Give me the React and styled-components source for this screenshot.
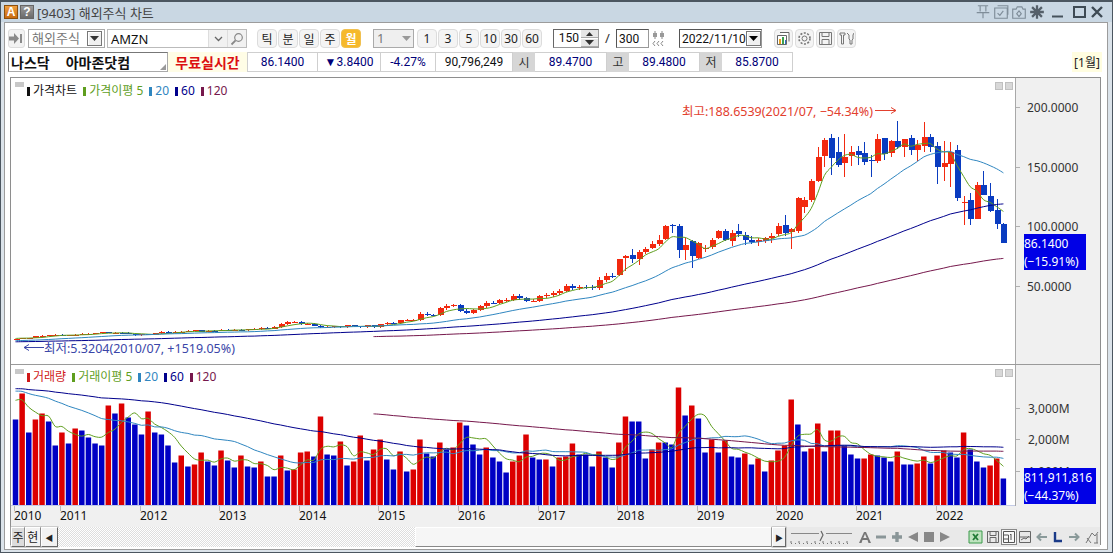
import React from "react";
import styled, { createGlobalStyle } from "styled-components";

const GlobalStyle = createGlobalStyle`
  html, body { margin: 0; padding: 0; background: #fff; }
  body { font-family: "Noto Sans", "Noto Sans CJK KR", sans-serif; font-size: 12px; }
  * { box-sizing: border-box; }
`;

// monthly data, Jun 2010 .. Nov 2022
const PRE_CLOSE = [
  6.25, 5.9, 6.8, 6.85, 6.25,
  2.2, 1.8, 1.7, 1.6, 1.75, 1.65, 2.2, 2.1, 2.25, 1.95, 2.4, 2.35,
  2.25, 1.9, 1.8, 1.75, 1.75, 1.95, 1.35, 1.5, 1.6, 1.9, 2.0, 2.0,
  1.9, 2.0, 2.0, 3.0, 3.4, 3.4, 3.9, 4.0, 4.65, 4.45, 4.5, 4.6,
  3.9, 3.2, 3.55, 3.9, 4.05, 3.65, 3.85, 4.05, 3.65, 2.85, 2.15, 2.55,
  2.95, 3.2, 3.65, 4.0, 3.9, 4.2, 4.3, 4.05, 4.65, 5.95, 6.75, 6.7,
];

const EARLY_CLOSE = [
  5.45, 5.93, 6.24, 7.85, 8.26, 8.75, 9.0,
  8.48, 8.63, 9.0, 9.83, 9.83, 10.2, 11.1, 10.76, 10.8, 10.6, 9.6, 8.65,
  9.7, 8.99, 10.1, 11.6, 10.6, 11.4, 11.6, 12.4, 12.7, 11.6, 12.6, 12.5,
  13.3, 13.2, 13.3, 12.7, 13.5, 13.9, 15.0, 14.0, 15.6, 18.2, 19.7, 19.9,
  17.9, 18.1, 16.8, 15.2, 15.6, 16.2, 15.6, 17.0, 16.1, 15.2, 16.9, 15.5,
  17.7, 19.0, 18.6, 21.1, 21.5, 21.7, 26.8, 25.7, 25.6, 31.3, 33.3, 33.8,
  29.4, 27.6, 29.7, 33.0, 36.1, 35.8, 37.9, 38.5, 41.9, 39.5, 37.5, 37.5,
  41.2, 42.3, 44.3, 46.2, 49.7, 48.4, 49.4, 49.0, 48.1, 55.3, 58.8, 58.5,
];

// open, high, low, close
const LATE_OHLC = [
  [59.4, 72.6, 58.5, 72.5], [73.2, 76.2, 62.9, 75.6], [76.0, 80.9, 69.0, 72.4], [72.6, 80.2, 67.6, 78.3],
  [78.2, 82.6, 77.2, 81.5], [81.9, 88.0, 81.3, 85.0], [85.3, 93.2, 83.9, 88.9], [89.1, 101.3, 88.8, 100.6],
  [100.9, 102.5, 94.3, 100.2], [100.2, 101.7, 73.8, 79.9], [80.4, 90.3, 71.8, 84.5], [87.7, 88.9, 65.4, 75.1],
  [73.3, 86.8, 73.0, 85.9], [81.9, 84.3, 78.3, 82.0], [83.0, 90.2, 80.7, 89.0], [90.0, 96.7, 89.9, 96.3],
  [96.6, 98.1, 88.2, 88.8], [88.0, 97.0, 83.6, 94.7], [96.2, 101.8, 91.0, 93.3], [92.9, 95.0, 84.3, 88.8],
  [88.7, 92.0, 85.6, 86.8], [87.0, 90.0, 84.0, 88.8], [88.0, 91.0, 86.0, 90.0], [90.2, 94.9, 86.0, 92.4],
  [93.8, 102.8, 91.6, 100.4], [101.6, 109.3, 92.0, 94.2], [95.3, 99.0, 81.3, 97.5], [96.6, 125.0, 94.3, 123.7],
  [116.8, 125.0, 111.1, 122.1], [122.4, 139.9, 120.6, 137.9], [137.9, 167.2, 137.0, 158.2], [159.0, 174.7, 150.0, 172.5],
  [174.5, 177.6, 143.6, 157.4], [163.0, 174.8, 150.0, 151.8], [153.0, 177.6, 142.0, 158.4], [159.0, 167.5, 151.0, 162.8],
  [163.5, 168.0, 152.0, 160.3], [162.0, 171.0, 152.0, 154.6], [156.0, 160.0, 142.0, 154.7], [155.0, 177.7, 153.0, 173.4],
  [174.0, 174.0, 156.0, 161.2], [162.0, 173.0, 158.0, 172.0], [172.0, 188.6, 165.0, 166.4], [167.0, 173.0, 158.8, 173.5],
  [174.0, 177.0, 160.0, 164.3], [164.5, 173.0, 155.0, 168.6], [168.0, 188.0, 163.0, 175.4], [175.0, 177.5, 163.0, 166.7],
  [167.5, 171.4, 135.4, 149.6], [150.0, 172.0, 138.0, 153.6], [152.7, 170.8, 133.6, 163.0], [164.0, 168.4, 121.6, 124.3],
  [120.0, 126.0, 101.3, 120.2], [122.0, 128.0, 101.4, 106.2], [106.0, 137.6, 105.9, 134.9], [135.0, 146.6, 126.7, 126.8],
  [126.0, 136.5, 112.0, 113.0], [113.6, 123.0, 97.7, 102.4], [102.0, 103.0, 85.9, 86.14],
];

// volume bars: [height in px, up?]
const VOLUME = [
  [86,0],[112,1],[73,0],[86,1],[92,1],[84,0],[60,0],[73,1],[62,0],[77,1],[75,0],[68,0],[62,0],[60,0],[100,1],
  [92,0],[102,1],[88,0],[81,0],[71,0],[94,1],[73,0],[71,0],[60,0],[43,0],[50,1],[39,0],[41,1],[53,1],[44,0],
  [40,0],[55,1],[45,0],[38,0],[50,1],[39,0],[38,0],[44,1],[29,0],[29,0],[50,1],[35,0],[36,1],[53,1],[54,1],
  [49,0],[89,1],[51,0],[50,0],[64,1],[40,0],[44,1],[70,1],[45,0],[56,1],[66,1],[46,0],[36,0],[54,1],[34,0],
  [36,1],[66,1],[52,0],[49,0],[63,1],[56,0],[58,1],[83,1],[80,0],[61,0],[51,0],[58,1],[48,0],[44,0],[33,0],
  [44,1],[50,1],[71,1],[48,0],[46,0],[46,1],[39,0],[48,1],[49,1],[62,1],[51,0],[51,0],[39,0],[54,1],[48,0],
  [38,0],[63,1],[89,1],[84,0],[84,0],[47,0],[56,1],[63,1],[63,0],[61,0],[118,1],[90,0],[100,1],[87,0],[53,0],
  [66,1],[53,0],[65,1],[49,0],[48,0],[52,1],[41,0],[47,1],[34,0],[45,1],[55,1],[60,1],[106,1],[81,0],[54,0],
  [57,1],[82,1],[54,0],[75,1],[75,1],[60,0],[51,0],[47,0],[47,1],[51,1],[50,0],[48,0],[44,0],[54,1],[41,0],
  [41,0],[42,1],[49,1],[42,0],[50,1],[55,1],[53,0],[48,0],[73,1],[56,0],[44,0],[38,0],[40,1],[47,1],[27,0],
];
const PRE_VOLUME = [...Array(60).fill(118), ...Array(5).fill(110)];

const barX = (i) => 15.5 + 6.63 * i;
const priceY = (p) => 345.5 - p * 1.19;
const volY = (h) => 505.5 - h;

const candles = [
  ...EARLY_CLOSE.map((c, i) => {
    const o = i === 0 ? 5.2 : EARLY_CLOSE[i - 1];
    return [o, Math.max(o, c) * 1.035, Math.min(o, c) * 0.965, c];
  }),
  ...LATE_OHLC,
];

const sma = (pre, values, period) =>
  values.map((_, i) => {
    const all = [...pre, ...values.slice(0, i + 1)];
    if (all.length < period) return null;
    return all.slice(-period).reduce((a, b) => a + b, 0) / period;
  });

// smooth line through the points, like the chart's own drawing
const splinePath = (pts) => {
  let d = `M${pts[0][0]} ${pts[0][1]}`;
  for (let i = 0; i < pts.length - 1; i++) {
    const p0 = pts[i - 1] || pts[i];
    const p1 = pts[i];
    const p2 = pts[i + 1];
    const p3 = pts[i + 2] || p2;
    const c1x = p1[0] + (p2[0] - p0[0]) / 6;
    const c1y = p1[1] + (p2[1] - p0[1]) / 6;
    const c2x = p2[0] - (p3[0] - p1[0]) / 6;
    const c2y = p2[1] - (p3[1] - p1[1]) / 6;
    d += `C${c1x.toFixed(1)} ${c1y.toFixed(1)} ${c2x.toFixed(1)} ${c2y.toFixed(1)} ${p2[0].toFixed(1)} ${p2[1].toFixed(1)}`;
  }
  return d;
};

const maPath = (series, toY) =>
  splinePath(series.map((v, i) => (v === null ? null : [barX(i), toY(v)])).filter(Boolean));

const MA_COLORS = { 5: "#5f9e1e", 20: "#2f86c0", 60: "#00008c", 120: "#76184c" };
const PERIODS = [5, 20, 60, 120];
const closes = candles.map((c) => c[3]);
const heights = VOLUME.map((v) => v[0]);

const YEARS = [
  [14, 2010], [60, 2011], [140, 2012], [219, 2013], [299, 2014], [378, 2015],
  [458, 2016], [538, 2017], [617, 2018], [697, 2019], [776, 2020], [856, 2021], [936, 2022],
];

const Window = styled.div`
  width: 1113px;
  height: 553px;
  display: flex;
  flex-direction: column;
  background: #dbe3ea;
  border: 1px solid #4b5660;
  border-top-width: 2px;
  padding: 0 4px 2px 3px;
  overflow: hidden;
`;

const TitleBar = styled.div`
  height: 20px;
  margin: 0 -4px 0 -3px;
  padding: 0 7px 0 3px;
  display: flex;
  align-items: center;
  background: #c9d7e3;
`;

const AppBadge = styled.span`
  width: 14px;
  height: 14px;
  margin-right: 2px;
  display: flex;
  align-items: center;
  justify-content: center;
  color: #fff;
  font: bold 12px "Liberation Sans", sans-serif;
  background: ${(p) => (p.$help ? "linear-gradient(#9a9a9a, #6a6a6a)" : "linear-gradient(#f0a040, #c86a10)")};
  border: 1px solid ${(p) => (p.$help ? "#666" : "#8a5010")};
`;

const TitleText = styled.div`
  margin-left: 1px;
  flex: 1;
  color: #444;
  font-size: 13px;
  white-space: nowrap;
`;

const TitleIcons = styled.div`
  display: flex;
  align-items: center;
  gap: 2px;
`;

const Body = styled.div`
  flex: 1;
  min-height: 0;
  display: flex;
  flex-direction: column;
  background: #fff;
  border: 1px solid #9c9c9c;
  padding: 6px 6px 4px 5px;
`;

const ToolRow = styled.div`
  height: 19px;
  margin-left: -2px;
  display: flex;
  align-items: stretch;
  flex: none;
`;

const ArrowButton = styled.div`
  width: 17px;
  margin-right: 3px;
  display: flex;
  align-items: center;
  justify-content: center;
  background: #f2f2f2;
  border: 1px solid #ddd;
  border-radius: 3px;
`;

const SelectBox = styled.div`
  width: ${(p) => p.$w}px;
  margin-left: ${(p) => p.$ml || 0}px;
  display: flex;
  align-items: center;
  justify-content: space-between;
  padding: 0 2px 0 3px;
  color: ${(p) => p.$color || "#000"};
  background: ${(p) => p.$bg || "#fff"};
  border: 1px solid #aaa;
  font-size: 13px;
  line-height: 1;
`;

const DropButton = styled.span`
  width: 15px;
  height: 15px;
  flex: none;
  display: flex;
  align-items: center;
  justify-content: center;
  background: #f0f0f0;
  border: 1px solid #777;
  box-shadow: inset 1px 1px 0 #fff;
`;

const SymbolBox = styled.div`
  width: 140px;
  margin-left: 2px;
  display: flex;
  align-items: stretch;
  border: 1px solid #bbb;
`;

const SymbolInput = styled.div`
  flex: 1;
  padding-left: 3px;
  display: flex;
  align-items: center;
  font: 13px "Noto Sans", sans-serif;
  color: #111;
`;

const SymbolIcon = styled.span`
  width: 19px;
  display: flex;
  align-items: center;
  justify-content: center;
  background: #f1f1f1;
  border-left: 1px solid #ddd;
`;

const ButtonGroup = styled.div`
  margin-left: ${(p) => p.$ml}px;
  display: flex;
  gap: 1px;
`;

const PeriodButton = styled.div`
  width: 20px;
  display: flex;
  align-items: center;
  justify-content: center;
  border-radius: 4px;
  font-size: 12px;
  color: ${(p) => (p.$active ? "#fff" : "#222")};
  font-weight: ${(p) => (p.$active ? 700 : 400)};
  background: ${(p) => (p.$active ? "#f6b92b" : "#f4f4f4")};
  border: 1px solid ${(p) => (p.$active ? "#f0c050" : "#dcdcdc")};
`;

const SpinBox = styled.div`
  width: 46px;
  margin-left: 11px;
  display: flex;
  border: 1px solid #999;
  border-top-color: #666;
  border-left-color: #666;
`;

const NumberText = styled.div`
  flex: 1;
  padding-right: 2px;
  text-align: right;
  font: 12px/17px Roboto, sans-serif;
  color: #111;
`;

const SpinArrows = styled.div`
  width: 17px;
  display: flex;
  flex-direction: column;
  gap: 1px;
`;

const SpinButton = styled.span`
  flex: 1;
  display: flex;
  align-items: center;
  justify-content: center;
  background: #e6e6e6;
  border-bottom: 1px solid #aaa;
`;

const Slash = styled.div`
  width: 17px;
  text-align: center;
  font-size: 13px;
  line-height: 19px;
  color: #333;
`;

const PlainBox = styled.div`
  width: ${(p) => p.$w}px;
  margin-left: ${(p) => p.$ml || 0}px;
  display: flex;
  align-items: center;
  justify-content: space-between;
  padding: 0 1px 0 2px;
  font: 12px Roboto, sans-serif;
  color: #111;
  white-space: nowrap;
  border: 1px solid #999;
  border-top-color: #555;
  border-left-color: #555;
`;

const SmallIcons = styled.div`
  margin-left: ${(p) => p.$ml}px;
  display: flex;
  align-items: center;
  gap: ${(p) => p.$gap || 2}px;
`;

const ToolIcon = styled.span`
  width: 19px;
  height: 19px;
  display: flex;
  align-items: center;
  justify-content: center;
  background: #f4f4f4;
  border: 1px solid #ddd;
  border-radius: 4px;
`;

const QuoteRow = styled.div`
  height: 20px;
  margin: 4px 0 0 -2px;
  display: flex;
  flex: none;
`;

const NameBox = styled.div`
  width: 160px;
  padding-left: 2px;
  position: relative;
  display: flex;
  align-items: center;
  gap: 16px;
  font: 700 14px "Noto Sans CJK KR", sans-serif;
  color: #111;
  border: 1px solid #aaa;
  border-top-color: #777;
  border-left-color: #777;
  background: #fff;

  &::after {
    content: "";
    position: absolute;
    right: 1px;
    bottom: 1px;
    border: 3px solid transparent;
    border-right-color: #999;
    border-bottom-color: #999;
  }
`;

const FreeTag = styled.div`
  width: 79px;
  display: flex;
  align-items: center;
  justify-content: center;
  color: #dc1010;
  background: #fffde6;
  font: 700 14px "Noto Sans CJK KR", sans-serif;
`;

const QuoteCell = styled.div`
  width: ${(p) => p.$w}px;
  display: flex;
  align-items: center;
  justify-content: center;
  font: 12px Roboto, sans-serif;
  color: ${(p) => p.$color || "#000078"};
  border: 1px solid #cfcfcf;
  border-left-width: ${(p) => (p.$first ? 1 : 0)}px;
`;

const QuoteHead = styled.div`
  width: 22px;
  display: flex;
  align-items: center;
  justify-content: center;
  font-size: 12px;
  color: #333;
  background: #d6d6d6;
`;

const MonthTag = styled.div`
  margin-left: auto;
  width: 30px;
  margin-right: -1px;
  display: flex;
  align-items: center;
  justify-content: center;
  font-size: 12px;
  color: #222;
  background: #fffde0;
`;

const ChartFrame = styled.div`
  flex: 1;
  min-height: 0;
  margin-top: 5px;
  display: flex;
  flex-direction: column;
  border: 1px solid #8e8e8e;
`;

const Pane = styled.div`
  height: ${(p) => p.$h}px;
  display: flex;
  flex: none;
  border-bottom: ${(p) => (p.$line ? "1px solid #9a9a9a" : "0")};
`;

const Plot = styled.div`
  position: relative;
  width: 1004px;
  flex: none;
  background: #fff;
`;

const PlotSvg = styled.svg`
  display: block;
  width: 100%;
  height: 100%;
`;

const Legend = styled.div`
  position: absolute;
  left: 16px;
  top: ${(p) => p.$top}px;
  display: flex;
  align-items: center;
  gap: 6px;
  font-size: 12px;
  line-height: 14px;
  white-space: nowrap;
`;

const LegendItem = styled.span`
  display: flex;
  align-items: center;
  gap: 3px;
  color: ${(p) => p.$color};

  &::before {
    content: "";
    width: 3px;
    height: 9px;
    background: ${(p) => p.$color};
  }
`;

const PaneMark = styled.span`
  position: absolute;
  left: 4px;
  top: 4px;
  width: 9px;
  height: 5px;
  background: #c8c8c8;
`;

const PaneButtons = styled.div`
  position: absolute;
  right: 2px;
  top: 4px;
  display: flex;
  gap: 2px;
`;

const PaneButton = styled.span`
  width: 8px;
  height: 8px;
  background: #d8d8d8;
  border: 1px solid #c0c0c0;
`;

const Axis = styled.div`
  position: relative;
  flex: 1;
  background: #f0f0f0;
  border-left: 1px solid #a8a8a8;
`;

const AxisBadge = styled.div`
  position: absolute;
  left: 8px;
  top: ${(p) => p.$top}px;
  width: ${(p) => p.$w}px;
  padding-top: 1px;
  background: #0000e6;
  color: #fff;
  font-size: 12px;
  line-height: 17.5px;
  white-space: nowrap;
`;

const AxisText = styled.text`
  font: 12px "Noto Sans", sans-serif;
  fill: #333;
`;

const NoteText = styled.text`
  font: 12.5px "Noto Sans", "Noto Sans CJK KR", sans-serif;
  fill: ${(p) => p.$color};
`;

const YearStrip = styled.div`
  height: 21px;
  flex: none;
  background: #f0f0f0;
`;

const YearText = styled.text`
  font: 12px "Noto Sans", sans-serif;
  fill: #111;
`;

const BottomBar = styled.div`
  flex: 1;
  display: flex;
  align-items: stretch;
  background: #e9e9e9;
  font-size: 12px;
`;

const BevelButton = styled.div`
  width: ${(p) => p.$w}px;
  display: flex;
  align-items: center;
  justify-content: center;
  color: #222;
  background: ${(p) => (p.$on ? "#dcdcdc" : "#f2f2f2")};
  border: 1px solid;
  border-color: #fff #666 #666 #fff;
  box-shadow: 0 0 0 0.5px #aaa;
  font-size: ${(p) => (p.$arrow ? 8 : 12)}px;
`;

const ScrollTrack = styled.div`
  width: 717px;
  padding-left: 357px;
  background: conic-gradient(#fff 25%, #dedede 0 50%, #fff 0 75%, #dedede 0) 0 0 / 2px 2px;
`;

const ScrollThumb = styled.div`
  height: 100%;
  background: #f6f6f6;
  border: 1px solid;
  border-color: #fff #888 #888 #fff;
`;

const RightTools = styled.div`
  display: flex;
  align-items: center;
  margin-left: 4px;
`;

const BarIcon = styled.span`
  width: 16px;
  height: 16px;
  margin-left: ${(p) => p.$ml || 0}px;
  display: flex;
  align-items: center;
  justify-content: center;
  border: ${(p) => (p.$on ? "1px solid #888" : "0")};
  background: ${(p) => (p.$on ? "#f8f8f8" : "transparent")};
`;

const Candles = () => (
  <g shapeRendering="crispEdges">
    {candles.map(([o, h, l, c], i) => {
      const color = c >= o ? "#f2290f" : "#0a3cc0";
      const x = barX(i);
      const top = priceY(Math.max(o, c));
      const bottom = priceY(Math.min(o, c));
      return (
        <g key={i} fill={color}>
          <rect x={Math.round(x)} y={priceY(h)} width={1} height={priceY(l) - priceY(h)} />
          <rect x={Math.round(x) - 2.5} y={top} width={6} height={Math.max(bottom - top, 1)} />
        </g>
      );
    })}
  </g>
);

const MaLines = ({ pre, values, toY }) =>
  PERIODS.map((p) => (
    <path key={p} d={maPath(sma(pre, values, p), toY)} fill="none" stroke={MA_COLORS[p]} strokeWidth={1} />
  ));

const PricePlot = () => (
  <PlotSvg viewBox="11 78 1004 286">
    <Candles />
    <MaLines pre={PRE_CLOSE} values={closes} toY={priceY} />
    <NoteText x={682} y={116} $color="#e2402e">최고:188.6539(2021/07, −54.34%)</NoteText>
    <path d="M875 110.500H896M891 107.500l5 3-5 3" fill="none" stroke="#e2402e" />
    <NoteText x={44} y={353} $color="#3a46a8">최저:5.3204(2010/07, +1519.05%)</NoteText>
    <path d="M44 347.500H24M29 344.500l-5 3 5 3" fill="none" stroke="#3a46a8" />
  </PlotSvg>
);

const VolumePlot = () => (
  <PlotSvg viewBox="11 365 1004 141">
    {VOLUME.map(([h, up], i) => (
      <rect key={i} x={barX(i) - 2.75} y={volY(h)} width={5.5} height={h} fill={up ? "#dc0000" : "#0000c4"} />
    ))}
    <MaLines pre={PRE_VOLUME} values={heights} toY={volY} />
    <path d="M11 505.500H1015" stroke="#c4cbe6" />
  </PlotSvg>
);

const AxisTicks = ({ ticks, viewBox }) => (
  <PlotSvg viewBox={viewBox}>
    {ticks.map(([y, label]) => (
      <g key={label}>
        <path d={`M1016 ${y + 0.5}h4`} stroke="#b0b0b0" />
        <AxisText x={label.endsWith("M") ? 1028 : 1027} y={y + 5}>{label}</AxisText>
      </g>
    ))}
  </PlotSvg>
);

const Gray = ({ d, w = 14, h = 14, stroke = "#7f8d99", sw = 1, fill = "none" }) => (
  <svg width={w} height={h} viewBox="0 0 14 14">
    <path d={d} fill={fill} stroke={stroke} strokeWidth={sw} />
  </svg>
);

const TitleButtons = () => (
  <TitleIcons>
    <Gray w={16} h={16} d="M2.500 1.500h9M4.500 1.500v5M9.500 1.500v5M1.500 7.500h11M7 7.500v5" />
    <Gray w={16} h={16} d="M1.500 3.500h11v9h-11zM4 1.500h9v8M4 8l2 2 3-4" />
    <Gray w={16} h={16} d="M1.500 4.500h3l1-2h4l1 2h2v8h-11zM7 6l2 2.500L7 11 5 8.500z" />
    <Gray w={16} h={16} stroke="#55606a" sw={2} d="M7 1v12M1 7h12M2.700 2.700l8.600 8.600M11.300 2.700l-8.600 8.600" />
    <svg width={20} height={16} viewBox="0 0 20 16" style={{ marginLeft: 3 }}>
      <path d="M2 12.500h11" stroke="#46525c" strokeWidth={2} />
    </svg>
    <svg width={15} height={16} viewBox="0 0 15 16">
      <path d="M2 3h11v10H2z" fill="none" stroke="#3e4a54" strokeWidth={2} />
    </svg>
    <svg width={16} height={16} viewBox="0 0 16 16">
      <path d="M3 3l10 10M13 3L3 13" stroke="#3e4a54" strokeWidth={2.400} />
    </svg>
  </TitleIcons>
);

const DownTri = ({ color = "#333" }) => (
  <svg width={9} height={5} viewBox="0 0 9 5">
    <path d="M0 0h9L4.500 5z" fill={color} />
  </svg>
);

const UpTri = () => (
  <svg width={7} height={4} viewBox="0 0 7 4">
    <path d="M0 4h7L3.500 0z" fill="#333" />
  </svg>
);

const ToolRowOne = () => (
  <ToolRow>
    <ArrowButton>
      <svg width={15} height={11} viewBox="0 0 15 11">
        <path d="M0 3.500h5V0l5 5.500-5 5.500V7.500H0z" fill="#8a8a8a" />
        <path d="M12 1v9" stroke="#8a8a8a" strokeWidth={2} />
      </svg>
    </ArrowButton>
    <SelectBox $w={77} $color="#777">
      해외주식
      <DropButton><DownTri /></DropButton>
    </SelectBox>
    <SymbolBox>
      <SymbolInput>AMZN</SymbolInput>
      <SymbolIcon>
        <svg width={9} height={6} viewBox="0 0 9 6"><path d="M1 1l3.500 3.500L8 1" fill="none" stroke="#666" strokeWidth={1.300} /></svg>
      </SymbolIcon>
      <SymbolIcon>
        <svg width={14} height={14} viewBox="0 0 14 14">
          <circle cx={8.500} cy={5.500} r={3.800} fill="none" stroke="#888" strokeWidth={1.200} />
          <path d="M5.600 8.400L1.500 12.500" stroke="#888" strokeWidth={1.800} />
        </svg>
      </SymbolIcon>
    </SymbolBox>
    <ButtonGroup $ml={10}>
      {["틱", "분", "일", "주", "월"].map((t) => (
        <PeriodButton key={t} $active={t === "월"}>{t}</PeriodButton>
      ))}
    </ButtonGroup>
    <SelectBox $w={41} $ml={12} $color="#777" $bg="#efefef">
      1
      <DownTri color="#999" />
    </SelectBox>
    <ButtonGroup $ml={3}>
      {[1, 3, 5, 10, 30, 60].map((t) => (
        <PeriodButton key={t}>{t}</PeriodButton>
      ))}
    </ButtonGroup>
    <SpinBox>
      <NumberText>150</NumberText>
      <SpinArrows>
        <SpinButton><UpTri /></SpinButton>
        <SpinButton><DownTri /></SpinButton>
      </SpinArrows>
    </SpinBox>
    <Slash>/</Slash>
    <PlainBox $w={33}>300</PlainBox>
    <SmallIcons $ml={3}>
      <svg width={14} height={17} viewBox="0 0 14 17">
        <path d="M3 1v8M10 1v8" stroke="#888" />
        <path d="M1 3h4v4H1zM8 3h4v4H8z" fill="#999" />
        <path d="M3 11l-2 2.500 2 2.500M7 11l-2 2.500 2 2.500M11 11l-2 2.500 2 2.500" fill="none" stroke="#888" />
      </svg>
    </SmallIcons>
    <PlainBox $w={83} $ml={13}>
      2022/11/10
      <DropButton><DownTri color="#000" /></DropButton>
    </PlainBox>
    <SmallIcons $ml={12} $gap={2}>
      <ToolIcon>
        <svg width={15} height={15} viewBox="0 0 15 15">
          <path d="M4 1.500h9v9M1.500 4.500h9v9h-9z" fill="#fff" stroke="#666" />
          <path d="M3 8h2v5H3z" fill="#e8a020" /><path d="M6 6h2v7H6z" fill="#3aa050" /><path d="M9 9h1v4H9z" fill="#3070c0" />
        </svg>
      </ToolIcon>
      <ToolIcon>
        <svg width={15} height={15} viewBox="0 0 15 15">
          <circle cx={7.500} cy={7.500} r={2.500} fill="none" stroke="#777" />
          <circle cx={7.500} cy={7.500} r={5.500} fill="none" stroke="#777" strokeDasharray="2 1.500" strokeWidth={1.600} />
        </svg>
      </ToolIcon>
      <ToolIcon>
        <svg width={15} height={15} viewBox="0 0 15 15">
          <path d="M1.500 1.500h12v12h-12zM4 1.500v4h7v-4M4 13.500v-5h7v5" fill="none" stroke="#777" />
        </svg>
      </ToolIcon>
      <ToolIcon>
        <svg width={15} height={15} viewBox="0 0 15 15">
          <path d="M1 2h5v2H4.500v9H2.500V4H1zM8 2l2 2v4l1 1v4h2V9l1-1V4l1-2" fill="none" stroke="#777" />
        </svg>
      </ToolIcon>
    </SmallIcons>
  </ToolRow>
);

const QuoteRowTwo = () => (
  <QuoteRow>
    <NameBox><span>나스닥</span><span>아마존닷컴</span></NameBox>
    <FreeTag>무료실시간</FreeTag>
    <QuoteCell $w={71} $first>86.1400</QuoteCell>
    <QuoteCell $w={63}>▼3.8400</QuoteCell>
    <QuoteCell $w={55}>-4.27%</QuoteCell>
    <QuoteCell $w={77} $color="#111">90,796,249</QuoteCell>
    <QuoteHead>시</QuoteHead>
    <QuoteCell $w={72}>89.4700</QuoteCell>
    <QuoteHead>고</QuoteHead>
    <QuoteCell $w={71}>89.4800</QuoteCell>
    <QuoteHead>저</QuoteHead>
    <QuoteCell $w={71}>85.8700</QuoteCell>
    <MonthTag>[1월]</MonthTag>
  </QuoteRow>
);

const PaneChrome = () => (
  <>
    <PaneMark />
    <PaneButtons>
      <PaneButton />
      <PaneButton />
    </PaneButtons>
  </>
);

const Bottom = () => (
  <BottomBar>
    <BevelButton $w={14} $on>주</BevelButton>
    <BevelButton $w={16}>현</BevelButton>
    <BevelButton $w={17} $arrow>◀</BevelButton>
    <ScrollTrack><ScrollThumb /></ScrollTrack>
    <BevelButton $w={14} $arrow>▶</BevelButton>
    <RightTools>
      <svg width={62} height={16} viewBox="0 0 62 16">
        <path d="M1 4.500h28M36 4.500h26" stroke="#888" />
        <path d="M31 2l2 4-3 6" fill="none" stroke="#666" strokeWidth={1.200} />
        <path d="M1 14.500h60" stroke="#777" strokeDasharray="1 3" />
        <path d="M1 12v2M9 12v2M17 12v2M25 12v2M33 12v2M41 12v2M49 12v2M57 12v2" stroke="#777" />
      </svg>
      <BarIcon $ml={5}>
        <svg width={14} height={14} viewBox="0 0 14 14"><path d="M1 13L6 2h2l5 11h-2.500L9.500 10H4.500l-1 3zM5.300 8h3.400L7 4z" fill="#777" /></svg>
      </BarIcon>
      <BarIcon><Gray d="M2 7h10" stroke="#8a9698" sw={3} /></BarIcon>
      <BarIcon><Gray d="M7 2v10M2 7h10" stroke="#8a9698" sw={3.400} /></BarIcon>
      <BarIcon><svg width={14} height={14} viewBox="0 0 14 14"><path d="M12 2v10L2 7z" fill="#888" /></svg></BarIcon>
      <BarIcon><svg width={14} height={14} viewBox="0 0 14 14"><path d="M2 2h10v10H2z" fill="#888" /></svg></BarIcon>
      <BarIcon><svg width={14} height={14} viewBox="0 0 14 14"><path d="M2 2v10l10-5z" fill="#888" /></svg></BarIcon>
      <BarIcon $ml={15}>
        <svg width={15} height={14} viewBox="0 0 15 14">
          <path d="M1 1h13v12H1z" fill="#bfe3bf" stroke="#3a9a4a" />
          <path d="M5 4l5 6M10 4L5 10" stroke="#1f7a35" strokeWidth={1.800} />
        </svg>
      </BarIcon>
      <BarIcon $ml={1}>
        <Gray d="M1.500 1.500h11v11h-11zM4 1.500v4h6v-4M4 12.500v-5h6v5" stroke="#666" />
      </BarIcon>
      <BarIcon $on>
        <Gray d="M1.500 1.500h11v11h-11zM1.500 5h5v7.500M1.500 9h5M9 10V4l-1 1" stroke="#555" />
      </BarIcon>
      <BarIcon>
        <Gray d="M1.500 1.500h11v11h-11zM1.500 7h11M3 10l3-2 2 1 3-3" stroke="#666" />
      </BarIcon>
      <BarIcon $ml={1}><Gray d="M12 7H3M6 3.500L2.500 7 6 10.500" stroke="#8a9a9a" sw={2} /></BarIcon>
      <BarIcon>
        <svg width={14} height={14} viewBox="0 0 14 14"><path d="M4 2v9h7" fill="none" stroke="#1a3a88" strokeWidth={2.400} /></svg>
      </BarIcon>
      <BarIcon><Gray d="M2 7h9M8 3.500L11.500 7 8 10.500" stroke="#8a9a9a" sw={2} /></BarIcon>
      <BarIcon $ml={2}>
        <Gray d="M1 13L7 3l3 3 3-4M2 8l4 5M12 4v9M9 13h4" stroke="#777" />
      </BarIcon>
    </RightTools>
  </BottomBar>
);

const App = () => (
  <>
    <GlobalStyle />
    <Window>
      <TitleBar>
        <AppBadge>A</AppBadge>
        <AppBadge $help>?</AppBadge>
        <TitleText>[9403] 해외주식 차트</TitleText>
        <TitleButtons />
      </TitleBar>
      <Body>
        <ToolRowOne />
        <QuoteRowTwo />
        <ChartFrame>
          <Pane $h={287} $line>
            <Plot>
              <PricePlot />
              <PaneChrome />
              <Legend $top={6}>
                <LegendItem $color="#111">가격차트</LegendItem>
                <LegendItem $color="#5f9e1e">가격이평 5</LegendItem>
                <LegendItem $color="#2f86c0">20</LegendItem>
                <LegendItem $color="#00008c">60</LegendItem>
                <LegendItem $color="#76184c">120</LegendItem>
              </Legend>
            </Plot>
            <Axis>
              <AxisTicks viewBox="1016 78 84 286" ticks={[[107, "200.0000"], [167, "150.0000"], [226, "100.0000"], [286, "50.0000"]]} />
              <AxisBadge $top={156} $w={62}>86.1400<br />(−15.91%)</AxisBadge>
            </Axis>
          </Pane>
          <Pane $h={141}>
            <Plot>
              <VolumePlot />
              <PaneChrome />
              <Legend $top={5}>
                <LegendItem $color="#d01818">거래량</LegendItem>
                <LegendItem $color="#5f9e1e">거래이평 5</LegendItem>
                <LegendItem $color="#2f86c0">20</LegendItem>
                <LegendItem $color="#00008c">60</LegendItem>
                <LegendItem $color="#76184c">120</LegendItem>
              </Legend>
            </Plot>
            <Axis>
              <AxisTicks viewBox="1016 365 84 141" ticks={[[408, "3,000M"], [439, "2,000M"], [471, "1,000M"]]} />
              <AxisBadge $top={103} $w={72}>811,911,816<br />(−44.37%)</AxisBadge>
            </Axis>
          </Pane>
          <YearStrip>
            <PlotSvg viewBox="11 506 1089 21">
              {YEARS.map(([x, label]) => (
                <g key={label}>
                  <path d={`M${x + 0.5} 506v5`} stroke="#b8b8b8" />
                  <YearText x={x} y={520}>{label}</YearText>
                </g>
              ))}
            </PlotSvg>
          </YearStrip>
          <Bottom />
        </ChartFrame>
      </Body>
    </Window>
  </>
);

export default App;
